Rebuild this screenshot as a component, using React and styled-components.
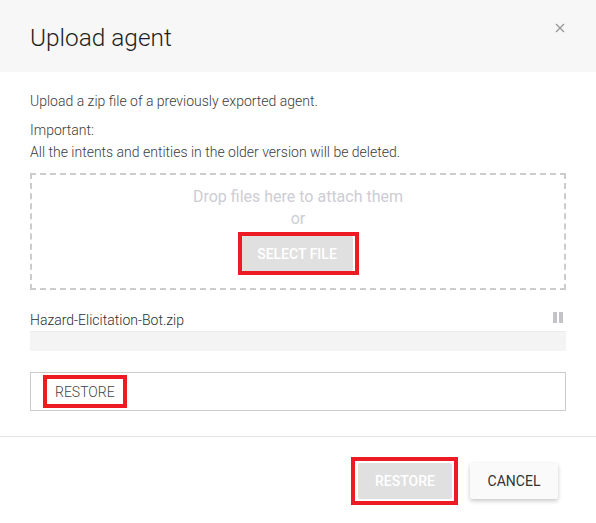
import React from 'react';
import styled, {createGlobalStyle} from 'styled-components';

const GlobalStyle = createGlobalStyle`
  html, body {
    margin: 0;
    padding: 0;
    background: #ffffff;
    font-family: Roboto, "Liberation Sans", sans-serif;
  }
`;

const HIGHLIGHT = '#ed1c24';

const Dialog = styled.div`
  width: 596px;
  height: 523px;
  background: #ffffff;
  display: flex;
  flex-direction: column;
`;

const Header = styled.div`
  height: 72px;
  background: #f7f7f7;
  padding: 0 30px;
  display: flex;
  align-items: center;
  justify-content: space-between;
  position: relative;
`;

const Title = styled.h2`
  margin: 0;
  font-size: 24.4px;
  font-weight: 300;
  color: #1e1e1e;
  padding-top: 2px;
`;

const CloseButton = styled.button`
  position: absolute;
  top: 22px;
  right: 30px;
  width: 12px;
  height: 12px;
  padding: 0;
  border: 0;
  background: none;
  display: flex;
`;

const Body = styled.div`
  padding: 18px 30px 0;
`;

const Text = styled.p`
  margin: 0 0 ${p => p.$gap || 0}px;
  font-size: 14px;
  font-weight: 300;
  line-height: 22px;
  color: #3c3c3c;
`;

const DropZone = styled.div`
  margin-top: 10px;
  border: 2px dashed #cccccc;
  padding-top: 11px;
  box-sizing: border-box;
  height: 117px;
  display: flex;
  flex-direction: column;
  align-items: center;
`;

const DropText = styled.div`
  font-size: 16px;
  line-height: 22px;
  color: #cdcdd4;
`;

const Highlight = styled.div`
  border: 4px solid ${HIGHLIGHT};
  padding: 0 ${p => p.$right || 0}px 0 0;
  display: inline-flex;
  margin-top: ${p => p.$top || 0}px;
  background: #ffffff;
`;

const FlatButton = styled.button`
  height: ${p => p.$h || 35}px;
  width: ${p => p.$w}px;
  border: 0;
  border-radius: 2px;
  background: #e0e0e0;
  color: #ffffff;
  font-family: inherit;
  font-size: 14px;
  font-weight: 500;
  padding: 0;
`;

const FileRow = styled.div`
  margin-top: 20px;
  display: flex;
  align-items: center;
  justify-content: space-between;
  height: 20px;
`;

const FileName = styled.span`
  font-size: 14px;
  font-weight: 300;
  color: #2e2e2e;
`;

const Pause = styled.div`
  display: flex;
  gap: 2px;
  margin-right: 3px;
  margin-top: -5px;

  span {
    width: 4px;
    height: 11px;
    background: #c4c4c8;
  }
`;

const Progress = styled.div`
  margin-top: 1px;
  height: 20px;
  background: #f4f4f4;
  border-top: 1px solid #ececec;
  box-sizing: border-box;
`;

const RestoreBox = styled.div`
  margin-top: 21px;
  height: 39px;
  border: 1px solid #cccccc;
  box-sizing: border-box;
  display: flex;
  align-items: center;
  padding-left: 12px;
`;

const RestoreLabel = styled.div`
  border: 4px solid ${HIGHLIGHT};
  height: 33px;
  box-sizing: border-box;
  padding: 0 8px;
  display: flex;
  align-items: center;
  font-size: 14px;
  font-weight: 300;
  color: #444444;
`;

const Divider = styled.hr`
  margin: 25px 0 0;
  border: 0;
  border-top: 1px solid #e4e4e4;
`;

const Footer = styled.div`
  display: flex;
  justify-content: flex-end;
  align-items: center;
  gap: 12px;
  padding: 20px 38px 0 0;
`;

const CancelButton = styled.button`
  width: 88px;
  height: 36px;
  border: 0;
  border-radius: 2px;
  background: #fafafa;
  box-shadow: 0 2px 4px rgba(0, 0, 0, 0.22);
  color: #333333;
  font-family: inherit;
  font-size: 14px;
  padding: 0;
`;

const CloseIcon = () => (
  <svg width="12" height="12" viewBox="0 0 12 12">
    <path d="M2 2L10 10M10 2L2 10" stroke="#9a9a9a" strokeWidth="1.4" />
  </svg>
);

const App = () => (
  <Dialog>
    <GlobalStyle />
    <Header>
      <Title>Upload agent</Title>
      <CloseButton aria-label="close">
        <CloseIcon />
      </CloseButton>
    </Header>
    <Body>
      <Text $gap={7}>Upload a zip file of a previously exported agent.</Text>
      <Text>Important:</Text>
      <Text>All the intents and entities in the older version will be deleted.</Text>
      <DropZone>
        <DropText>Drop files here to attach them</DropText>
        <DropText>or</DropText>
        <Highlight $top={2} $right={2}>
          <FlatButton $w={111}>SELECT FILE</FlatButton>
        </Highlight>
      </DropZone>
      <FileRow>
        <FileName>Hazard-Elicitation-Bot.zip</FileName>
        <Pause>
          <span />
          <span />
        </Pause>
      </FileRow>
      <Progress />
      <RestoreBox>
        <RestoreLabel>RESTORE</RestoreLabel>
      </RestoreBox>
    </Body>
    <Divider />
    <Footer>
      <Highlight $right={2}>
        <FlatButton $w={94} $h={36} style={{margin: '2px 0 2px 3px'}}>RESTORE</FlatButton>
      </Highlight>
      <CancelButton>CANCEL</CancelButton>
    </Footer>
  </Dialog>
);

export default App;
